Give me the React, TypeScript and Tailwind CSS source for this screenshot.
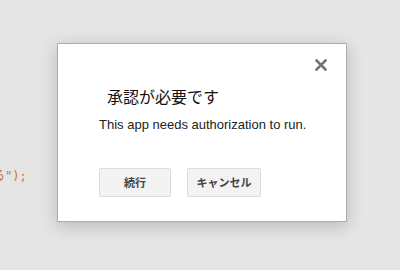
import React from "react";

export default function App() {
  return (
    <div className="w-[400px] h-[270px] bg-[#e5e5e5] overflow-hidden flex items-start font-['Liberation_Sans','Noto_Sans_CJK_JP',sans-serif]">
      <div className="w-[57px] shrink-0 pt-[168px] overflow-hidden">
        <div className="ml-[-7px] text-[12px] leading-[16px] text-[#c0782e] whitespace-pre font-['DejaVu_Sans_Mono','Noto_Sans_CJK_JP',monospace]">
          る");
        </div>
      </div>
      <div className="mt-[43px] w-[290px] h-[179px] shrink-0 bg-white border border-[#acacac] shadow-[0_4px_16px_rgba(0,0,0,0.2)] flex flex-col">
        <div className="flex justify-end pt-[15px] pr-[19px] h-[42px]">
          <svg width="12" height="12" viewBox="0 0 12 12">
            <path d="M1.5 1.5 L10.5 10.5 M10.5 1.5 L1.5 10.5" stroke="#737373" strokeWidth="2.6" strokeLinecap="square" />
          </svg>
        </div>
        <div className="pl-[49px] text-[16px] leading-[20px] text-[#111] font-['Noto_Sans_CJK_JP',sans-serif]">
          承認が必要です
        </div>
        <div className="pl-[41px] mt-[11px] text-[13px] leading-[16px] text-[#222]">
          This app needs authorization to run.
        </div>
        <div className="flex gap-[16px] pl-[41px] mt-[35px]">
          <button className="w-[72px] h-[29px] bg-[#f3f3f3] border border-[#dcdcdc] rounded-[2px] text-[11px] font-bold text-[#444] font-['Noto_Sans_CJK_JP',sans-serif]">
            続行
          </button>
          <button className="w-[74px] h-[29px] bg-[#f3f3f3] border border-[#dcdcdc] rounded-[2px] text-[11px] font-bold text-[#444] font-['Noto_Sans_CJK_JP',sans-serif]">
            キャンセル
          </button>
        </div>
      </div>
    </div>
  );
}
